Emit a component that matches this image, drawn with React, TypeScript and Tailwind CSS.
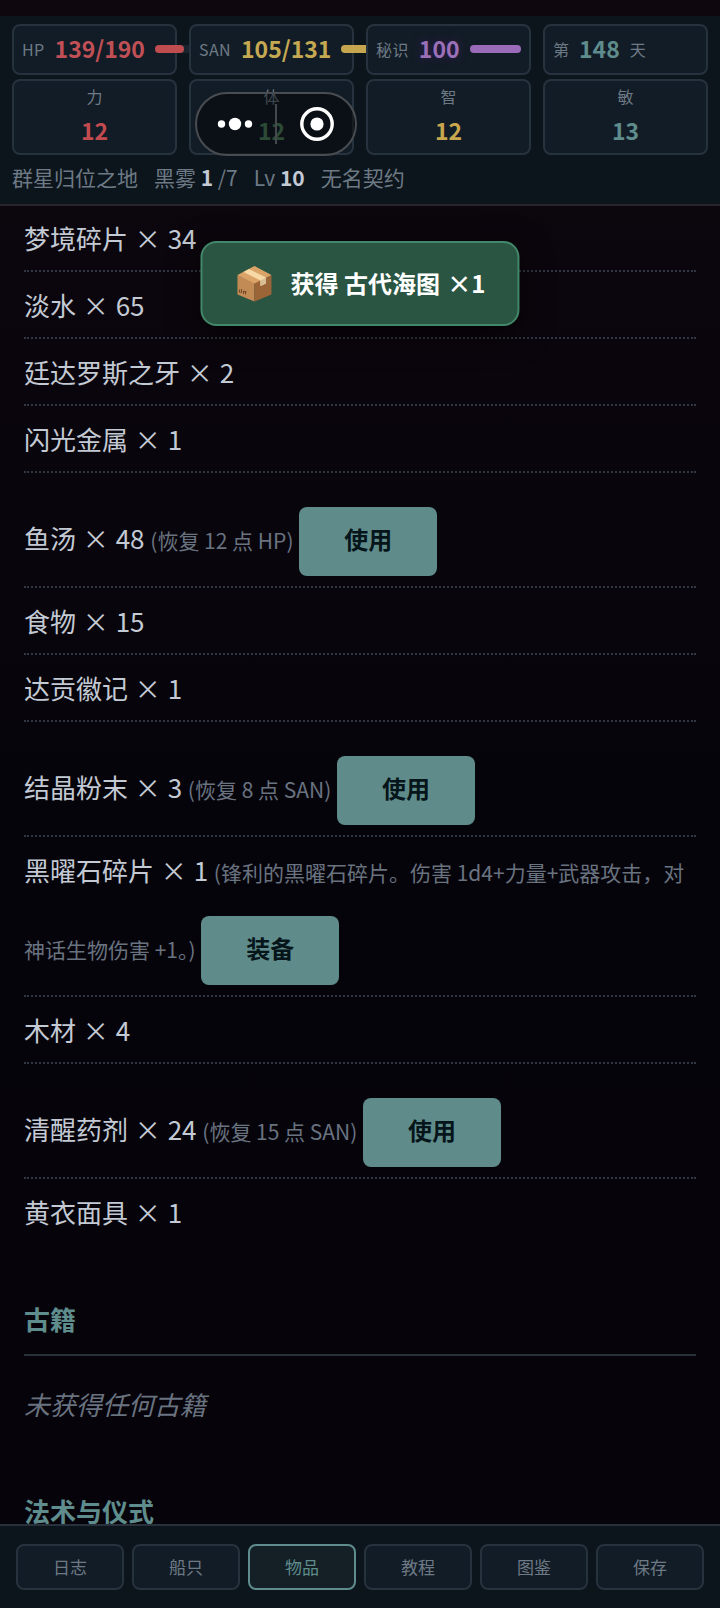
import { useState } from "react";

type Item = {
  name: string;
  count: number;
  note?: string;
  action?: string;
};

const items: Item[] = [
  { name: "梦境碎片", count: 34 },
  { name: "淡水", count: 65 },
  { name: "廷达罗斯之牙", count: 2 },
  { name: "闪光金属", count: 1 },
  { name: "鱼汤", count: 48, note: "(恢复 12 点 HP)", action: "使用" },
  { name: "食物", count: 15 },
  { name: "达贡徽记", count: 1 },
  { name: "结晶粉末", count: 3, note: "(恢复 8 点 SAN)", action: "使用" },
  {
    name: "黑曜石碎片",
    count: 1,
    note: "(锋利的黑曜石碎片。伤害 1d4+力量+武器攻击，对神话生物伤害 +1。)",
    action: "装备",
  },
  { name: "木材", count: 4 },
  { name: "清醒药剂", count: 24, note: "(恢复 15 点 SAN)", action: "使用" },
  { name: "黄衣面具", count: 1 },
];

const stats = [
  { label: "力", value: 12, color: "text-[#c24b50]" },
  { label: "体", value: 12, color: "text-[#4a7c59]" },
  { label: "智", value: 12, color: "text-[#c9a74e]" },
  { label: "敏", value: 13, color: "text-[#5f8c8c]" },
];

const tabs = ["日志", "船只", "物品", "教程", "图鉴", "保存"];

const card = "rounded-lg border-2 border-[#26323d] bg-[#121c26]";

function Gauge({ label, value, color, bar, percent }: {
  label: string;
  value: string;
  color: string;
  bar: string;
  percent: number;
}) {
  return (
    <div className={`${card} flex h-[51px] items-center gap-[10px] px-2 pb-[2px]`}>
      <span className="shrink-0 text-base tracking-wide text-[#6d7a85]">{label}</span>
      <span className={`shrink-0 text-[23px] font-bold ${color}`}>{value}</span>
      <div className="h-2 min-w-10 flex-1 rounded-full bg-[#18232d]">
        <div className={`h-2 rounded-full ${bar}`} style={{ width: `${percent}%` }} />
      </div>
    </div>
  );
}

function BoxIcon() {
  return (
    <svg viewBox="0 0 40 40" className="size-10 shrink-0" aria-hidden="true">
      <path d="M3 12 20 19.500V38.500L3 31.500Z" fill="#c28a55" />
      <path d="M37 12 20 19.500V38.500L37 31.500Z" fill="#9c6538" />
      <path d="M3 12 20 3 37 12 20 20.500Z" fill="#dba368" />
      <path d="M9 9 14.500 6 31.500 14.500V20.500L26 23V17.500Z" fill="#f6d9a4" />
      <path d="M26 17.500 31.500 14.500V20.500L26 23Z" fill="#d9bd96" />
      <path d="M5 26.500v3M7 26v3.500h-1M9 28v3M11 28.500v3M9.500 28l2.500 1" stroke="#6b4526" strokeWidth="1" fill="none" />
    </svg>
  );
}

export default function App() {
  const [tab, setTab] = useState("物品");

  return (
    <div className="relative flex h-screen flex-col overflow-hidden bg-linear-to-b from-[#0e070e] via-[#06040b] to-[#06030b] pt-4 font-['Noto_Sans_CJK_SC',sans-serif] text-[#c3cad4]">
      <header className="shrink-0 border-b-2 border-[#2a242d] bg-[#0c141c] px-3 pt-2 pb-[11px]">
        <div className="grid grid-cols-4 gap-x-3 gap-y-1">
          <Gauge label="HP" value="139/190" color="text-[#c05055]" bar="bg-[#bf4d50]" percent={73} />
          <Gauge label="SAN" value="105/131" color="text-[#c5a952]" bar="bg-[#c5a64e]" percent={80} />
          <Gauge label="秘识" value="100" color="text-[#9a70b8] [text-shadow:0_0_8px_#3a1d5a]" bar="bg-[#9a6bb8]" percent={100} />
          <div className={`${card} flex h-[51px] items-center gap-[10px] px-2 pb-[2px]`}>
            <span className="text-base text-[#6d7a85]">第</span>
            <span className="text-[23px] font-bold text-[#5f8c8c]">148</span>
            <span className="text-base text-[#6d7a85]">天</span>
          </div>
          {stats.map((s) => (
            <div key={s.label} className={`${card} flex h-[76px] flex-col items-center pt-[3px]`}>
              <span className="text-base leading-6 text-[#6d7a85]">{s.label}</span>
              <span className={`mt-1 text-[23px] leading-9 font-bold ${s.color}`}>{s.value}</span>
            </div>
          ))}
        </div>
        <div className="mt-[6px] flex gap-4 text-[21px] leading-8 text-[#6d7a85]">
          <span>群星归位之地</span>
          <span>黑雾 <b className="text-[#c3cad4]">1</b> /7</span>
          <span>Lv <b className="text-[#c3cad4]">10</b></span>
          <span>无名契约</span>
        </div>
      </header>

      <main className="min-h-0 flex-1 overflow-y-auto px-6 text-[26px] leading-[45px] [scrollbar-width:none]">
        <ul className="-mt-px">
          {items.map((item) => (
            <li key={item.name} className="border-b-2 border-dotted border-[#303742] py-[10px] last:border-b-0">
              {item.name} <span className="mx-px">×</span> {item.count}
              {item.note && <span className="mx-px text-[21px] leading-none text-[#697380]"> {item.note} </span>}
              {item.action && (
                <button className="mt-6 inline-block h-[69px] w-[138px] rounded-lg bg-[#5f8c8b] pb-[6px] text-2xl font-semibold text-[#06151a]">
                  {item.action}
                </button>
              )}
            </li>
          ))}
        </ul>
        <section className="mt-[52px]">
          <h2 className="border-b-2 border-[#28303a] pb-[13px] font-bold text-[#5f8c8c]">古籍</h2>
          <p className="mt-[15px] py-[10px] text-[#697380] italic">未获得任何古籍</p>
        </section>
        <section className="mt-[52px]">
          <h2 className="border-b-2 border-[#28303a] pb-[13px] font-bold text-[#5f8c8c]">法术与仪式</h2>
        </section>
      </main>

      <nav className="flex shrink-0 gap-2 border-t-2 border-[#28313b] bg-[#0c141c] px-4 py-[18px]">
        {tabs.map((t) => (
          <button
            key={t}
            onClick={() => setTab(t)}
            className={`h-[46px] flex-1 rounded-lg border-2 pb-px text-[17px] ${
              t === tab
                ? "border-[#5f8c8c] bg-[#142026] text-[#5f8c8c]"
                : "border-[#26323d] bg-[#121c26] text-[#6d7a85]"
            }`}
          >
            {t}
          </button>
        ))}
      </nav>

      {/* toast */}
      <div
        role="status"
        className="absolute top-[241px] left-1/2 flex h-[85px] -translate-x-1/2 items-center gap-4 rounded-2xl border-2 border-[#43876a] bg-[#2a5542] px-8 pb-[2px] text-2xl font-bold whitespace-nowrap text-white shadow-[0_8px_32px_rgba(0,0,0,0.6)]"
      >
        <BoxIcon />
        <span>获得 古代海图 <span className="ml-[2px]">×1</span></span>
      </div>

      {/* mini program capsule */}
      <div className="absolute top-[92px] left-[195px] flex h-16 w-[162px] items-center rounded-full border-2 border-[#494d52] bg-black/40">
        <button aria-label="更多" className="flex flex-1 justify-center pr-px">
          <svg viewBox="0 0 36 14" className="h-[14px] w-9" fill="#fff">
            <circle cx="4.500" cy="7" r="3.700" />
            <circle cx="18" cy="7" r="6.200" />
            <circle cx="31.500" cy="7" r="3.700" />
          </svg>
        </button>
        <div className="h-10 w-[2px] bg-[#45494e]" />
        <button aria-label="关闭" className="flex flex-1 justify-center pl-[2px]">
          <svg viewBox="0 0 36 36" className="size-9" fill="#fff">
            <circle cx="18" cy="18" r="15.200" fill="none" stroke="#fff" strokeWidth="3.400" />
            <circle cx="18" cy="18" r="6.600" />
          </svg>
        </button>
      </div>
    </div>
  );
}
